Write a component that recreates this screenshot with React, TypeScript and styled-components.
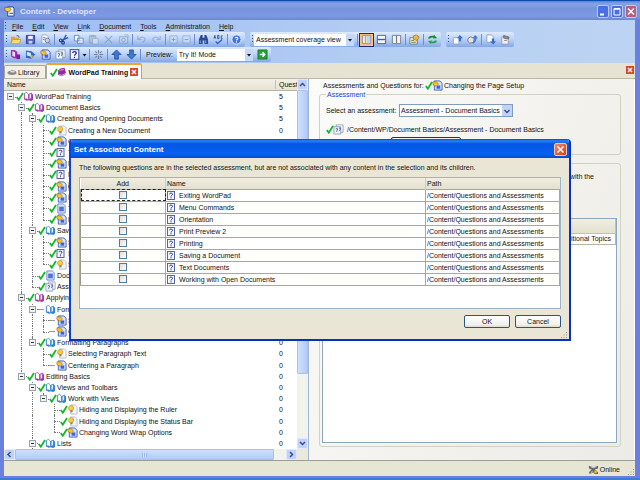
import React from "react";
import styled, { createGlobalStyle, css } from "styled-components";

const Global = createGlobalStyle`
  * { box-sizing: border-box; }
  body { margin: 0; background: #0a47a8; }
  body, button, select, input, table {
    font-family: "Liberation Sans", Tahoma, sans-serif;
    font-size: 7px;
    line-height: 9px;
    color: #111;
  }
  button { padding: 0; border: 0; background: none; }
`;

/* ---------- window frame ---------- */

const Window = styled.div`
  display: flex;
  flex-direction: column;
  height: 100vh;
  min-height: 300px;
  border-bottom: 2px solid #3f7ad8;
  background: #6b80dc;
  overflow: hidden;
`;

const TitleBar = styled.header`
  display: flex;
  align-items: center;
  gap: 4px;
  height: 20px;
  flex: none;
  padding: 2px 3px 0 4px;
  border-top: 1px solid #0a4cae;
  background: linear-gradient(#5f80d4, #86a3e6 15%, #7893de 40%, #7d99e2 80%, #6a86d4);
`;

const Title = styled.h1`
  flex: 1;
  margin: 0;
  font-size: 8px;
  line-height: 12px;
  font-weight: bold;
  color: #dbe5fb;
`;

const CaptionButton = styled.button<{ $close?: boolean }>`
  width: 12px;
  height: 13px;
  margin-left: -2px;
  border: 1px solid #b9c9f6;
  border-radius: 2px;
  background: ${(p) => (p.$close ? "#b4607c" : "#4a6fe0")};
  svg { display: block; width: 10px; height: 11px; }
`;

const Body = styled.div`
  display: flex;
  flex-direction: column;
  flex: 1;
  min-height: 0;
  margin: 0 5px 2px 4px;
  background: #ece9d8;
`;

/* ---------- menu and tool bars ---------- */

const Bars = styled.div`
  flex: none;
  padding-bottom: 1px;
  background: linear-gradient(90deg, #9dbcf1, #b7d0f4 70%, #bdd3f3);
`;

const Grip = styled.span`
  width: 1px;
  height: 9px;
  margin: 0 1px;
  background: repeating-linear-gradient(#35538f 0 1px, transparent 1px 3px);
`;

const MenuBar = styled.nav`
  display: flex;
  align-items: center;
  height: 12px;
`;

const MenuList = styled.ul`
  display: flex;
  gap: 9px;
  margin: 0;
  padding: 0 5px;
  list-style: none;
`;

const Accel = styled.u``;

const ToolRow = styled.div`
  display: flex;
  gap: 5px;
  height: 15px;
`;

const ToolBar = styled.div`
  display: flex;
  align-items: center;
  height: 15px;
  padding: 0 1px;
  border-radius: 2px;
  background: linear-gradient(#dfebfd, #b5cdf5 55%, #83a7e6);
`;

const ToolButton = styled.button<{ $narrow?: boolean; $on?: boolean; $dim?: boolean }>`
  display: flex;
  align-items: center;
  justify-content: center;
  width: ${(p) => (p.$narrow ? 13 : 15)}px;
  height: 14px;
  opacity: ${(p) => (p.$dim ? 0.55 : 1)};
  ${(p) => p.$on && css`border: 1px solid #1b2a80; background: #fbc27a;`}
  svg { width: 11px; height: 11px; flex: none; }
`;

const DropMark = styled.button`
  width: 7px;
  height: 12px;
  svg { display: block; width: 7px; height: 12px; }
`;

const Sep = styled.span`
  width: 1px;
  height: 11px;
  margin: 0 1px;
  background: #6d8fd0;
`;

const BarLabel = styled.label`
  padding: 0 4px;
`;

const arrow = (color: string) =>
  `url("data:image/svg+xml,%3Csvg xmlns='http://www.w3.org/2000/svg' viewBox='0 0 8 10'%3E${color}%3C/svg%3E")`;

const BarSelect = styled.select<{ $w: number }>`
  appearance: none;
  width: ${(p) => p.$w}px;
  height: 12px;
  margin-right: 2px;
  padding: 0 10px 0 2px;
  border: 0;
  border-radius: 0;
  background:
    ${arrow("%3Cpath d='M2 4h4L4 6.5z' fill='%23111'/%3E")} right / 8px 10px no-repeat,
    linear-gradient(90deg, #fff calc(100% - 8px), #c4d8f8 0);
`;

/* ---------- tabs ---------- */

const TabStrip = styled.div`
  display: flex;
  align-items: flex-end;
  flex: none;
  height: 16px;
  padding-right: 1px;
  background: #e7e3d3;
  border-bottom: 1px solid #b9b7a8;
`;

const Tab = styled.button<{ $active?: boolean }>`
  display: flex;
  align-items: center;
  height: 13px;
  padding: 0 4px 0 2px;
  border: 1px solid #a9a797;
  border-bottom: 0;
  border-radius: 2px 2px 0 0;
  background: #f2f0e6;
  svg { width: 10px; height: 10px; }
  ${(p) =>
    p.$active &&
    css`
      margin-bottom: -1px;
      height: 16px;
      padding: 0 3px;
      border-top: 2px solid #f0a52a;
      background: #fff;
      font-weight: bold;
    `}
`;

const TabText = styled.span`
  padding: 0 2px 0 1px;
`;

const CloseBox = styled.button`
  width: 8px;
  height: 8px;
  background: #dc4527;
  svg { display: block; width: 8px; height: 8px; }
`;

const TabClose = styled.span`
  display: flex;
  margin: 0 0 4px auto;
`;

const RedX = () => (
  <svg viewBox="0 0 8 8"><path d="M2 2l4 4M6 2L2 6" stroke="#fff" strokeWidth="1.4" /></svg>
);

/* ---------- main split ---------- */

const Split = styled.main`
  display: grid;
  grid-template-columns: minmax(0, 305fr) minmax(0, 326fr);
  flex: 1;
  min-height: 0;
  border-bottom: 1px solid #9a9d9a;
`;

const TreePane = styled.section`
  display: grid;
  grid-template: 12px minmax(0, 1fr) 11px / minmax(0, 1fr) 11px;
  background: #fff;
  border-right: 1px solid #9fb6d4;
`;

const TreeHead = styled.div`
  display: grid;
  grid-template-columns: minmax(0, 1fr) 22px;
  align-items: center;
  padding-left: 3px;
  background: linear-gradient(#f3f1e6, #e6e3d2);
  border-bottom: 1px solid #b8b5a2;
  overflow: hidden;
  white-space: nowrap;
`;

const HeadCell = styled.span<{ $ruled?: boolean }>`
  ${(p) => p.$ruled && css`border-left: 1px solid #c3c0ae; padding-left: 3px;`}
`;

const Tree = styled.ul`
  display: grid;
  grid-auto-rows: minmax(0, 1fr);
  margin: 0;
  padding: 0 0 0 1px;
  list-style: none;
  overflow: hidden;
`;

const TreeRow = styled.li`
  display: grid;
  grid-template-columns: minmax(0, 1fr) 18px;
  align-items: stretch;
  white-space: nowrap;
`;

const NodeLine = styled.span`
  display: flex;
  align-items: stretch;
  min-width: 0;
`;

const Guide = styled.span<{ $kind: string }>`
  position: relative;
  display: flex;
  align-items: center;
  justify-content: center;
  width: 11px;
  flex: none;
  &::before {
    content: "";
    position: absolute;
    left: 5px;
    top: 0;
    bottom: ${(p) => ("LE".includes(p.$kind) ? "50%" : 0)};
    border-left: ${(p) => ("|TLXE".includes(p.$kind) ? "1px dotted #777" : "0")};
  }
  &::after {
    content: "";
    position: absolute;
    left: 5px;
    right: 0;
    top: 50%;
    border-top: ${(p) => ("TLXER".includes(p.$kind) ? "1px dotted #777" : "0")};
  }
  svg { position: relative; z-index: 1; width: 7px; height: 7px; }
`;

const CheckCell = styled.span<{ $empty?: boolean }>`
  display: flex;
  align-items: center;
  width: 7px;
  flex: none;
  svg { width: 8px; height: 9px; flex: none; }
  ${(p) => p.$empty && css`background: linear-gradient(#999, #999) left center / 6px 1px no-repeat;`}
`;

const IconCell = styled.span<{ $small?: boolean }>`
  display: flex;
  align-items: center;
  width: 12px;
  flex: none;
  svg { width: ${(p) => (p.$small ? 9 : 11)}px; height: ${(p) => (p.$small ? 9 : 11)}px; }
`;

const NodeText = styled.span<{ $selected?: boolean }>`
  align-self: center;
  ${(p) => p.$selected && css`background: #c9c6ba;`}
`;

const Count = styled.span`
  align-self: center;
`;

const VScroll = styled.div`
  grid-column: 2;
  grid-row: 1 / 3;
  display: grid;
  grid-template-rows: 11px 284fr 64fr 11px;
  background: #f3f3ee;
`;

const HScroll = styled.div`
  display: grid;
  grid-template-columns: 11px 260fr 12fr 11px;
  background: #f3f3ee;
`;

const ScrollButton = styled.button`
  border: 1px solid #dfe8fc;
  border-radius: 2px;
  background: #c0d2fa;
  svg { display: block; width: 9px; height: 9px; }
`;

const Thumb = styled.span<{ $flat?: boolean }>`
  display: flex;
  align-items: center;
  justify-content: center;
  border: 1px solid #a9c0f0;
  border-radius: 1px;
  background: ${(p) => (p.$flat ? "linear-gradient(#cfdffd, #b3cafa)" : "linear-gradient(90deg, #cfdffd, #b3cafa)")};
`;

const ThumbRidge = styled.i`
  width: 5px;
  height: 4px;
  background: repeating-linear-gradient(90deg, #9db5ea 0 1px, #dbe6fd 1px 2px);
`;

const Corner = styled.span`
  background: #ece9d8;
`;

/* ---------- assessment pane ---------- */

const Detail = styled.section`
  display: flex;
  flex-direction: column;
  gap: 4px;
  min-width: 0;
  padding: 1px 13px 13px 10px;
  background: linear-gradient(115deg, #fbfbfa, #f2f1ec 60%, #ecebe8);
  border-right: 1px solid #fff;
`;

const Inline = styled.div`
  display: flex;
  align-items: center;
  white-space: nowrap;
`;

const Heading = styled(Inline)`
  padding-left: 4px;
  height: 10px;
`;

const HeadingLabel = styled.span`
  width: 102px;
`;

const Group = styled.fieldset<{ $grow?: boolean }>`
  display: flex;
  flex-direction: column;
  min-width: 0;
  margin: 0;
  border: 1px solid #d3d1c2;
  border-radius: 3px;
  ${(p) =>
    p.$grow
      ? css`flex: 1; min-height: 0; padding: 8px 3px 3px 2px;`
      : css`flex: none; height: 65px; padding: 5px 6px; margin: -4px 0 4px;`}
`;

const Legend = styled.legend`
  padding: 0 1px;
  color: #1047d4;
`;

const FieldLabel = styled.label`
  width: 73px;
`;

const FieldSelect = styled.select`
  appearance: none;
  width: 114px;
  height: 13px;
  padding: 0 12px 0 1px;
  border: 1px solid #7f9db9;
  border-radius: 0;
  background:
    ${arrow("%3Cpath d='M1.5 4L4 6.500 6.500 4' fill='none' stroke='%23334f86' stroke-width='1.400'/%3E")} right 1px center / 8px 10px no-repeat,
    linear-gradient(90deg, #fff calc(100% - 10px), #c1d3fb 0);
`;

const PathLine = styled(Inline)`
  height: 24px;
`;

const PathText = styled.span`
  padding-left: 2px;
`;

const WideButton = styled.button`
  width: 70px;
  height: 12px;
  margin-left: 65px;
  flex: none;
  margin-top: -4px;
  border: 1px solid #003c74;
  border-radius: 2px;
  background: #f6f5ef;
`;

const Note = styled.p`
  width: 272px;
  margin: 0 0 37px;
  text-align: right;
`;

const TopicBox = styled.div`
  flex: 1;
  min-height: 0;
  border: 1px solid #8ba8bd;
  background: #fff;
`;

const TopicTable = styled.table`
  width: 100%;
  border-collapse: collapse;
  th {
    height: 14px;
    padding: 0 3px;
    background: linear-gradient(#f0eee2, #e3e0cf);
    border: 1px solid #c4c1af;
    border-top: 0;
    font-weight: normal;
    text-align: left;
  }
  td {
    height: 11px;
    padding: 0 4px;
    border: 1px solid #b8b5a4;
    text-align: right;
  }
`;

/* ---------- status bar ---------- */

const StatusBar = styled.footer`
  display: flex;
  align-items: center;
  justify-content: flex-end;
  gap: 1px;
  flex: none;
  height: 15px;
  padding-top: 2px;
  background: #e7e5d3;
  svg { width: 11px; height: 11px; }
`;

const SizeGrip = styled.span`
  align-self: flex-end;
  display: flex;
  margin-left: 6px;
  svg { width: 8px; height: 8px; }
`;

/* ---------- dialog ---------- */

const Overlay = styled.div`
  position: fixed;
  inset: 0;
  display: flex;
  align-items: center;
  justify-content: center;
`;

const Dialog = styled.section`
  display: flex;
  flex-direction: column;
  width: 502px;
  max-width: 96%;
  border: 2px solid #0b42e0;
  border-top: 0;
  border-right-color: #0a2fc4;
  border-bottom-color: #0a2fc4;
  border-radius: 4px 4px 0 0;
  background: #e9e6d6;
  overflow: hidden;
`;

const DialogTitle = styled.header`
  display: flex;
  align-items: center;
  justify-content: space-between;
  height: 19px;
  padding: 2px 2px 0 3px;
  background: linear-gradient(#0842c8, #2a83f5 10%, #0557e5 25%, #0560f0 80%, #0649cf);
`;

const DialogName = styled.h2`
  margin: 0;
  font-size: 8px;
  line-height: 12px;
  color: #fff;
`;

const DialogClose = styled.button`
  width: 13px;
  height: 13px;
  border: 1px solid #f3c6bb;
  border-radius: 2px;
  background: linear-gradient(135deg, #ee8a6b, #d5401b);
  svg { display: block; width: 11px; height: 11px; }
`;

const DialogBody = styled.div`
  display: flex;
  flex-direction: column;
  padding: 5px 8px 0;
`;

const Message = styled.p`
  margin: 0;
  height: 14px;
  white-space: nowrap;
`;

const GridBox = styled.div`
  height: 132px;
  border: 1px solid #9cb4c8;
  background: #fff;
`;

const Questions = styled.table`
  width: 100%;
  border-collapse: collapse;
  table-layout: fixed;
  th {
    height: 11px;
    padding: 0 1px;
    background: linear-gradient(#f0eee2, #e3e0cf);
    font-weight: normal;
    text-align: left;
  }
  th + th { border-left: 1px solid #cfccbb; }
  th:first-child, td:first-child { width: 85px; text-align: center; }
  th:last-child { width: 134px; }
  td {
    height: 12px;
    padding: 0 1px;
    border: 1px solid #aaa898;
    border-left-color: #9c9a8a;
    white-space: nowrap;
  }
`;

const FocusCell = styled.td`
  outline: 1px dashed #222;
  outline-offset: -1px;
`;

const Tick = styled.input`
  appearance: none;
  display: block;
  width: 8px;
  height: 8px;
  margin: 0 auto;
  border: 1px solid #4f7ba3;
  background: linear-gradient(135deg, #dcdcd7, #fff);
`;

const QuestionName = styled.label`
  display: flex;
  align-items: center;
  gap: 4px;
  height: 10px;
  svg { width: 8px; height: 9px; }
`;

const Buttons = styled.div`
  display: flex;
  justify-content: flex-end;
  gap: 5px;
  padding: 6px 0 3px;
`;

const PushButton = styled.button`
  width: 46px;
  height: 13px;
  border: 1px solid #2a5683;
  border-radius: 2px;
  background: linear-gradient(#fff, #f1f0ea 80%, #dcd8cc);
`;

const DialogGrip = styled.div`
  display: flex;
  justify-content: flex-end;
  margin: 0 -7px;
  height: 8px;
  svg { width: 8px; height: 8px; }
`;

/* ---------- icons ---------- */

const Check = () => (
  <svg viewBox="0 0 8 9"><path d="M.8 5l2 2.700L7 1" fill="none" stroke="#0fb92a" strokeWidth="1.800" /></svg>
);
const Plus = () => (
  <svg viewBox="0 0 7 7"><rect x=".5" y=".5" width="6" height="6" fill="#f3f2ec" stroke="#98a3b0" /><path d="M2 3.500h3" stroke="#333" /></svg>
);
const BookIcon = ({ c = "#a03aa8" }: { c?: string }) => (
  <svg viewBox="0 0 12 12">
    <path d="M1 3l3-1.500 2 2 3-1.500 2 2v5.500l-2 1.500-3-1-2 .5L1 9z" fill={c} />
    <path d="M1.600 2.500L4 1.500l2 2v6.300L3.500 8.500l-1.900.2zM6.800 3.600l2.200-1.300v5.500l-2.200 1.600z" fill="#fff" stroke={c} strokeWidth=".7" />
  </svg>
);
const SolidBook = () => (
  <svg viewBox="0 0 12 12"><path d="M3 2l6-1 2 7-5 3-4-1z" fill="#9526a6" /><path d="M2 9l4 1 5-2.500M4 4l4-1" fill="none" stroke="#efc8f4" /><path d="M2 3.500v6" stroke="#571064" /></svg>
);
const BulbPage = () => (
  <svg viewBox="0 0 12 12"><path d="M4 1h5l2 2v8H4z" fill="#f1f5fb" stroke="#a0b0cc" strokeWidth=".8" /><circle cx="4.500" cy="4.500" r="2.800" fill="#fbcb45" stroke="#c98f1e" strokeWidth=".7" /><path d="M4 7h2v2H4z" fill="#8b7458" /></svg>
);
const DocIcon = () => (
  <svg viewBox="0 0 12 12"><path d="M2.500 1h6l2.500 2.500V11H2.500z" fill="#d4e2fb" stroke="#2a4cb5" strokeWidth=".9" /><path d="M5 6h4v3.500H5z" fill="#3b64da" /><path d="M1 2h4l2 2.500L4.500 7 1 5z" fill="#fbc22c" stroke="#8a6316" strokeWidth=".6" /></svg>
);
const PageIcon = () => (
  <svg viewBox="0 0 12 12"><path d="M2 1h6l2 2v8H2z" fill="#dce8fd" stroke="#5c7cc4" strokeWidth=".9" /><path d="M3.500 4h5v5h-5z" fill="#3c62d8" /><path d="M3.500 5.500h5M3.500 7.500h5" stroke="#8eaaf0" strokeWidth=".5" /></svg>
);
const AssessIcon = () => (
  <svg viewBox="0 0 12 12"><path d="M3.500 1H11v8H3.500z" fill="#fff" stroke="#7b8db0" strokeWidth=".8" /><path d="M1 3h7.500v8H1z" fill="#eef2fa" stroke="#7b8db0" strokeWidth=".8" /><path d="M3 5.500q2-1.500 2 0t-1 2v1M6.500 4.500q2-1 1.500 1l-1 2" fill="none" stroke="#3c5089" strokeWidth=".9" /></svg>
);
const QuestionIcon = () => (
  <svg viewBox="0 0 8 9"><rect x=".5" y=".5" width="7" height="8" fill="#f3f5ff" stroke="#5663a6" /><path d="M2.500 3.200C2.500 1.800 5.500 1.800 5.500 3.300 5.500 4.300 4 4.300 4 5.500M4 6.300v1" fill="none" stroke="#1d2a86" /></svg>
);
const HatIcon = () => (
  <svg viewBox="0 0 12 12"><ellipse cx="6" cy="7" rx="5.500" ry="2.500" fill="#8a8a85" /><path d="M3 5.500l3-1.500 4 1-1 2H4z" fill="#dedddb" stroke="#666" strokeWidth=".5" /></svg>
);
const AppIcon = () => (
  <svg viewBox="0 0 12 12"><path d="M4 1h6l1 2v8H4z" fill="#e6ecfb" stroke="#26468f" /><path d="M1 1.500h5L7.500 4 5 6.500 1 5z" fill="#f7d334" stroke="#75560f" strokeWidth=".7" /><path d="M6 8h4" stroke="#444" /></svg>
);
const GripDots = () => (
  <svg viewBox="0 0 8 8"><path d="M6 1h1v1H6zM3.500 3.500h1v1h-1zM6 3.500h1v1H6zM1 6h1v1H1zM3.500 6h1v1h-1zM6 6h1v1H6z" fill="#9d9a88" /></svg>
);
const OnlineIcon = () => (
  <svg viewBox="0 0 12 12"><path d="M1 2l5 1.500L11 2v3L7.500 6l3.500 3v2H7L6 9l-4 2-1-2 3-3L1 5z" fill="#65676a" /><path d="M3 3l3 1 3-1M3 9.500l2-1.500" stroke="#ddd" fill="none" /><path d="M7 7h2.500v3H7z" fill="#e8c31c" /></svg>
);
const Chevron = ({ d }: { d: string }) => (
  <svg viewBox="0 0 9 9"><path d={d} fill="none" stroke="#33518f" strokeWidth="1.500" /></svg>
);

const art: Record<string, React.ReactNode> = {
  open: <><path d="M1 3h4l1 1h4v6H1z" fill="#e5a925" /><path d="M3 6h9l-2 4.500H1z" fill="#fcd975" stroke="#a87614" strokeWidth=".5" /><path d="M7 2q3-1 3 2" fill="none" stroke="#3668c4" /></>,
  save: <><path d="M1.500 1.500h9v9h-9z" fill="#5763c6" stroke="#31398f" /><path d="M3.500 2h5v3.500h-5z" fill="#eef1fb" /><path d="M4 7.500h4v3H4z" fill="#c9cfec" /></>,
  preview: <><path d="M2 1h5l2 2v7H2z" fill="#f4f7fc" stroke="#8599ba" strokeWidth=".7" /><circle cx="8" cy="7" r="2.500" fill="#bfd4ef" stroke="#6c7f9d" /><path d="M9.500 9l2 2.500M3 4h3M3 6h2" stroke="#6c7f9d" /></>,
  cut: <><path d="M9 1L5 8M11 4L4 7" stroke="#2a55ad" strokeWidth="1.300" /><circle cx="3" cy="7" r="1.500" fill="none" stroke="#173f92" strokeWidth="1.200" /><circle cx="5.500" cy="9.500" r="1.500" fill="none" stroke="#173f92" strokeWidth="1.200" /></>,
  copy: <><path d="M1.500 1.500h5v6h-5zM5 4.500h6v6H5z" fill="#f4f8ff" stroke="#5b7fc4" strokeWidth=".9" /><path d="M6.500 7h3M6.500 9h3" stroke="#7d9bd6" strokeWidth=".6" /></>,
  paste: <><path d="M1.500 2h7v8h-7z" fill="#a9b7cf" stroke="#7486a8" /><path d="M3 1h4v2H3z" fill="#7486a8" /><path d="M5 5h6v6H5z" fill="#e7edf8" stroke="#7486a8" strokeWidth=".7" /></>,
  del: <path d="M2 2l8 8M10 2l-8 8" stroke="#6e84b4" strokeWidth="1.300" />,
  props: <><path d="M1.500 3h9v7h-9z" fill="#c7d6ef" stroke="#7189bb" /><circle cx="6" cy="6.500" r="2" fill="none" stroke="#7189bb" /><path d="M7 1h4v3" stroke="#7189bb" fill="none" /></>,
  undo: <path d="M2 2v4h4M2.500 6Q7 1 10 5q0 3-3 4" fill="none" stroke="#7590c8" strokeWidth="1.200" />,
  redo: <path d="M10 2v4H6M9.500 6Q5 1 2 5q0 3 3 4" fill="none" stroke="#7590c8" strokeWidth="1.200" />,
  plus: <><path d="M2 2h8v8H2z" fill="#d3e1f8" stroke="#7590c8" /><path d="M4 6h4M6 4v4" stroke="#5572b4" /></>,
  minus: <><path d="M2 2h8v8H2z" fill="#d3e1f8" stroke="#7590c8" /><path d="M4 6h4" stroke="#5572b4" /></>,
  find: <><path d="M3 1h2v3h2V1h2l2 5v5H7V7H5v4H1V6z" fill="#2b4a94" /><path d="M2.500 7v3M8.500 7v3" stroke="#8fb0ea" /></>,
  spell: <><path d="M1 5l1-3.500L3 5M1.500 4h1M5 1.500V5h1.500v-3.500H5zM10.500 2H9v3h1.500" fill="none" stroke="#1e3a86" strokeWidth=".8" /><path d="M3 8l2 2.500L10 6" fill="none" stroke="#2f62cc" strokeWidth="1.500" /></>,
  help: <><circle cx="6" cy="6" r="5" fill="#3f74d8" stroke="#e6effc" /><path d="M4.500 4.500q1.500-2 3 0 0 1.200-1.500 2V7M6 8v1.200" fill="none" stroke="#fff" strokeWidth="1.200" /></>,
  layout1: <><path d="M1.500 1.500h9v9h-9z" fill="#fbe3c0" stroke="#7f8fb4" /><path d="M5 2v8" stroke="#8fa0c4" /><path d="M6 2.500h4v7H6z" fill="#c5d4ee" /></>,
  layout2: <><path d="M1.500 1.500h9v9h-9z" fill="#f3f7ff" stroke="#4b5f86" /><path d="M2 6h8" stroke="#4b5f86" strokeWidth="1.500" /></>,
  layout3: <><path d="M1.500 1.500h9v9h-9z" fill="#f3f3ea" stroke="#6f7c92" /><path d="M6 2v8" stroke="#6f7c92" strokeWidth="1.300" /></>,
  prop2: <><path d="M1 4h8v7H1z" fill="#e8ead8" stroke="#666f5c" strokeWidth=".8" /><path d="M5 2l3-1 3 2-2 4-4-1z" fill="#f0ba3f" stroke="#7a5a1b" strokeWidth=".6" /><path d="M2.500 7h3M2.500 9h5" stroke="#3b864a" strokeWidth=".9" /></>,
  refresh: <><path d="M1 5Q2 1 7 2l1-1 3 3.500-4.500.5L7 4Q4 3.500 3.500 5z" fill="#188c31" /><path d="M11 7q-1 4-6 3l-1 1-3-3.500L5.500 7 5 8q3 .5 3.500-1z" fill="#2aa545" /></>,
  up1: <><path d="M1.500 4h6v7h-6z" fill="#f7faff" stroke="#8498b8" strokeWidth=".8" /><path d="M8.500 1L12 4.500h-2V8H7.500V4.500H5.500z" fill="#376fce" /></>,
  up2: <><path d="M1 5l3-2 4 2-1 4-4 1-2-2z" fill="#e5e5dd" stroke="#707988" /><path d="M9 1l3 3.500h-1.500Q10 9 6 11q2-3 2-6.500H6z" fill="#4b7cc9" /></>,
  down1: <><path d="M2 1h5l2 2v6H2z" fill="#f7faff" stroke="#7f93b5" strokeWidth=".8" /><path d="M7.500 5v3h-2L9 11.500 12 8h-2V5z" fill="#376fce" /></>,
  tidy: <><path d="M2 3h7v8H2z" fill="#f2f2ec" stroke="#8c8f94" strokeWidth=".8" /><path d="M4 1.500l6 2-1 2-5-1zM4.500 7h3" stroke="#58606c" fill="#8b93a0" strokeWidth=".8" /></>,
  bookAdd: <><path d="M1 1h4l3 2v7H4L1 8z" fill="#a02fae" /><path d="M2.500 2.500l3 1v5l-3-1z" fill="#f1d3f5" /><path d="M7 6h4v5H7z" fill="#7a2195" /></>,
  tag: <><path d="M1 1.500l6 1L11 6l-4 4.500-6-1z" fill="#2f63cf" /><path d="M2 3l4 1 1 3-2 1-3-1z" fill="#d5e5fd" /><path d="M5 7h4l-2 3z" fill="#f3c53a" /></>,
  spin: <path d="M6 1v4M6 7v4M1 6h4M7 6h4M2.500 2.500l2 2M7.500 7.500l2 2M9.500 2.500l-2 2M4.500 7.500l-2 2" stroke="#6f82a0" strokeWidth="1.200" />,
  up: <path d="M6 1l5 5H8v5H4V6H1z" fill="#3e78d8" stroke="#173f92" strokeWidth=".8" />,
  down: <path d="M6 11L1 6h3V1h4v5h3z" fill="#3e78d8" stroke="#173f92" strokeWidth=".8" />,
  go: <><path d="M1 1h10v10H1z" fill="#21a337" stroke="#127024" strokeWidth=".8" /><path d="M3 6h5M6 3.500L8.500 6 6 8.500" fill="none" stroke="#fff" strokeWidth="1.500" /></>,
};

const Tool = ({ n, label, ...rest }: { n: string; label: string; $narrow?: boolean; $on?: boolean; $dim?: boolean }) => (
  <ToolButton aria-label={label} {...rest}><svg viewBox="0 0 12 12">{art[n]}</svg></ToolButton>
);

/* ---------- data ---------- */

/* Guides: "|" passing line, "T" branch, "L" last branch,
   "X" expander with more below, "E" last expander, "R" root expander. */
type Node = [guides: string, icon: string, text: string, count?: string, flag?: string];

const nodes: Node[] = [
  ["R", "book", "WordPad Training", "5"],
  [" X", "book", "Document Basics", "5"],
  [" |X", "lesson", "Creating and Opening Documents", "5"],
  [" ||T", "bulb", "Creating a New Document"],
  [" ||T", "doc", "Creating a Document"],
  [" ||T", "question", "Text Documents"],
  [" ||T", "doc", "Menu Commands"],
  [" ||T", "question", "Menu Commands"],
  [" ||T", "doc", "Changing the Page Setup", "0", "selected"],
  [" ||T", "doc", "Print Preview"],
  [" ||T", "page", "Text Documents"],
  [" ||L", "doc", "Exiting WordPad"],
  [" |X", "lesson", "Saving Documents"],
  [" ||T", "doc", "Saving a Document"],
  [" ||T", "question", "Saving a Document"],
  [" ||L", "bulb", "Saving a Document"],
  [" |T", "page", "Document Basics"],
  [" |L", "assess", "Assessment - Document Basics"],
  [" X", "book", "Applying Formatting"],
  [" |X", "lesson", "Formatting Text", "0", "bare"],
  [" ||T", "doc", "Selecting Text", "0", "bare"],
  [" ||L", "doc", "Changing Text", "0", "bare"],
  [" |E", "lesson", "Formatting Paragraphs"],
  [" | T", "bulb", "Selecting Paragraph Text"],
  [" | L", "doc", "Centering a Paragraph", "0", "bare"],
  [" E", "book", "Editing Basics"],
  ["  X", "lesson", "Views and Toolbars"],
  ["  |E", "lesson", "Work with Views"],
  ["  | T", "bulb", "Hiding and Displaying the Ruler"],
  ["  | T", "bulb", "Hiding and Displaying the Status Bar"],
  ["  | L", "doc", "Changing Word Wrap Options"],
  ["  X", "lesson", "Lists"],
];

const nodeIcons: Record<string, React.ReactNode> = {
  book: <BookIcon />,
  lesson: <BookIcon c="#2f7fcf" />,
  bulb: <BulbPage />,
  doc: <DocIcon />,
  question: <QuestionIcon />,
  page: <PageIcon />,
  assess: <AssessIcon />,
};

const menus = ["File", "Edit", "View", "Link", "Document", "Tools", "Administration", "Help"];

const questions = [
  "Exiting WordPad", "Menu Commands", "Orientation", "Print Preview 2",
  "Printing", "Saving a Document", "Text Documents", "Working with Open Documents",
];

/* ---------- app ---------- */

export default function App() {
  return (
    <>
      <Global />
      <Window>
        <TitleBar>
          <IconCell><AppIcon /></IconCell>
          <Title>Content - Developer</Title>
          <CaptionButton aria-label="Minimize"><svg viewBox="0 0 10 11"><path d="M2 8.500h4" stroke="#fff" strokeWidth="2" /></svg></CaptionButton>
          <CaptionButton aria-label="Maximize"><svg viewBox="0 0 10 11"><path d="M2 2.500h6V9H2z" fill="none" stroke="#fff" /><path d="M2 3h6" stroke="#fff" strokeWidth="1.500" /></svg></CaptionButton>
          <CaptionButton $close aria-label="Close"><svg viewBox="0 0 10 11"><path d="M2 2.500l6 6M8 2.500l-6 6" stroke="#fff" strokeWidth="1.500" /></svg></CaptionButton>
        </TitleBar>

        <Body>
          <Bars>
            <MenuBar>
              <Grip />
              <MenuList>
                {menus.map((m) => <li key={m}><Accel>{m[0]}</Accel>{m.slice(1)}</li>)}
              </MenuList>
            </MenuBar>
            <ToolRow>
              <ToolBar>
                <Grip />
                <Tool n="open" label="Open" /><Tool n="save" label="Save" /><Tool n="preview" label="Print preview" />
                <Sep />
                <Tool n="cut" label="Cut" /><Tool n="copy" label="Copy" /><Tool n="paste" label="Paste" $dim />
                <Tool n="del" label="Delete" $dim /><Tool n="props" label="Capture" $dim />
                <Sep />
                <Tool n="undo" label="Undo" $dim /><Tool n="redo" label="Redo" $dim />
                <Sep />
                <Tool n="plus" label="Expand" $dim $narrow /><Tool n="minus" label="Collapse" $dim $narrow />
                <Sep />
                <Tool n="find" label="Find" /><Tool n="spell" label="Spelling" />
                <Sep />
                <Tool n="help" label="Help" />
              </ToolBar>
              <ToolBar>
                <Grip />
                <BarSelect $w={100} aria-label="View"><option>Assessment coverage view</option></BarSelect>
                <Sep />
                <Tool n="layout1" label="Single layout" $on /><Tool n="layout2" label="Stacked layout" /><Tool n="layout3" label="Side layout" />
                <Sep />
                <Tool n="prop2" label="Properties" />
                <Sep />
                <Tool n="refresh" label="Refresh" />
              </ToolBar>
              <ToolBar>
                <Grip />
                <Tool n="up1" label="Check in" /><Tool n="up2" label="Check in all" />
                <Sep />
                <Tool n="down1" label="Check out" /><Tool n="tidy" label="History" />
              </ToolBar>
            </ToolRow>
            <ToolRow>
              <ToolBar>
                <Grip />
                <Tool n="bookAdd" label="New module" /><Tool n="tag" label="New section" />
                <ToolButton aria-label="New topic"><DocIcon /></ToolButton>
                <ToolButton aria-label="New assessment"><AssessIcon /></ToolButton>
                <ToolButton $narrow aria-label="New question"><QuestionIcon /></ToolButton>
                <DropMark aria-label="More questions"><svg viewBox="0 0 7 12"><path d="M1.500 5h4l-2 2.500z" fill="#111" /></svg></DropMark>
                <Sep />
                <Tool n="spin" label="Link" />
                <Sep />
                <Tool n="up" label="Move up" /><Tool n="down" label="Move down" />
                <Sep />
                <BarLabel htmlFor="preview">Preview:</BarLabel>
                <BarSelect id="preview" $w={76}><option>Try It! Mode</option></BarSelect>
                <Tool n="go" label="Go" />
              </ToolBar>
            </ToolRow>
          </Bars>

          <TabStrip>
            <Tab><HatIcon /><TabText>Library</TabText></Tab>
            <Tab as="div" $active>
              <CheckCell><Check /></CheckCell><SolidBook /><TabText>WordPad Training</TabText>
              <CloseBox aria-label="Close tab"><RedX /></CloseBox>
            </Tab>
            <TabClose><CloseBox aria-label="Close view"><RedX /></CloseBox></TabClose>
          </TabStrip>

          <Split>
            <TreePane>
              <TreeHead><HeadCell>Name</HeadCell><HeadCell $ruled>Questions</HeadCell></TreeHead>
              <Tree>
                {nodes.map(([guides, icon, text, count = "0", flag], i) => (
                  <TreeRow key={i}>
                    <NodeLine>
                      {guides.split("").map((g, k) => (
                        <Guide key={k} $kind={g === " " ? "." : g}>{"XER".includes(g) && <Plus />}</Guide>
                      ))}
                      <CheckCell $empty={flag === "bare"}>{flag !== "bare" && <Check />}</CheckCell>
                      <IconCell $small={icon === "question"}>{nodeIcons[icon]}</IconCell>
                      <NodeText $selected={flag === "selected"}>{text}</NodeText>
                    </NodeLine>
                    <Count>{count}</Count>
                  </TreeRow>
                ))}
              </Tree>
              <VScroll>
                <ScrollButton aria-label="Scroll up"><Chevron d="M2 6l2.500-2.500L7 6" /></ScrollButton>
                <Thumb />
                <span />
                <ScrollButton aria-label="Scroll down"><Chevron d="M2 3l2.500 2.500L7 3" /></ScrollButton>
              </VScroll>
              <HScroll>
                <ScrollButton aria-label="Scroll left"><Chevron d="M5.500 2L3 4.500 5.500 7" /></ScrollButton>
                <Thumb $flat><ThumbRidge /></Thumb>
                <span />
                <ScrollButton aria-label="Scroll right"><Chevron d="M3 2l2.500 2.500L3 7" /></ScrollButton>
              </HScroll>
              <Corner />
            </TreePane>

            <Detail>
              <Heading>
                <HeadingLabel>Assessments and Questions for:</HeadingLabel>
                <CheckCell><Check /></CheckCell>
                <IconCell><DocIcon /></IconCell>
                <span>Changing the Page Setup</span>
              </Heading>
              <Group>
                <Legend>Assessment</Legend>
                <Inline>
                  <FieldLabel htmlFor="assessment">Select an assessment:</FieldLabel>
                  <FieldSelect id="assessment"><option>Assessment - Document Basics</option></FieldSelect>
                </Inline>
                <PathLine>
                  <CheckCell><Check /></CheckCell>
                  <IconCell><AssessIcon /></IconCell>
                  <PathText>/Content/WP/Document Basics/Assessment - Document Basics</PathText>
                </PathLine>
                <WideButton aria-label="Associate content" />
              </Group>
              <Group $grow>
                <Note>Questions associated with the</Note>
                <TopicBox>
                  <TopicTable>
                    <thead><tr><th aria-label="Topics" /></tr></thead>
                    <tbody><tr><td>Additional Topics</td></tr></tbody>
                  </TopicTable>
                </TopicBox>
              </Group>
            </Detail>
          </Split>

          <StatusBar>
            <OnlineIcon />
            <span>Online</span>
            <SizeGrip><GripDots /></SizeGrip>
          </StatusBar>
        </Body>
      </Window>

      <Overlay>
        <Dialog role="dialog" aria-labelledby="dialog-name">
          <DialogTitle>
            <DialogName id="dialog-name">Set Associated Content</DialogName>
            <DialogClose aria-label="Close"><svg viewBox="0 0 11 11"><path d="M2.500 2.500l6 6M8.500 2.500l-6 6" stroke="#fff" strokeWidth="1.500" /></svg></DialogClose>
          </DialogTitle>
          <DialogBody>
            <Message>The following questions are in the selected assessment, but are not associated with any content in the selection and its children.</Message>
            <GridBox>
              <Questions>
                <thead><tr><th>Add</th><th>Name</th><th>Path</th></tr></thead>
                <tbody>
                  {questions.map((q, i) => {
                    const Cell = i === 0 ? FocusCell : "td";
                    return (
                      <tr key={q}>
                        <Cell><Tick type="checkbox" id={`q${i}`} /></Cell>
                        <td><QuestionName htmlFor={`q${i}`}><QuestionIcon />{q}</QuestionName></td>
                        <td>/Content/Questions and Assessments</td>
                      </tr>
                    );
                  })}
                </tbody>
              </Questions>
            </GridBox>
            <Buttons>
              <PushButton>OK</PushButton>
              <PushButton>Cancel</PushButton>
            </Buttons>
            <DialogGrip><GripDots /></DialogGrip>
          </DialogBody>
        </Dialog>
      </Overlay>
    </>
  );
}
